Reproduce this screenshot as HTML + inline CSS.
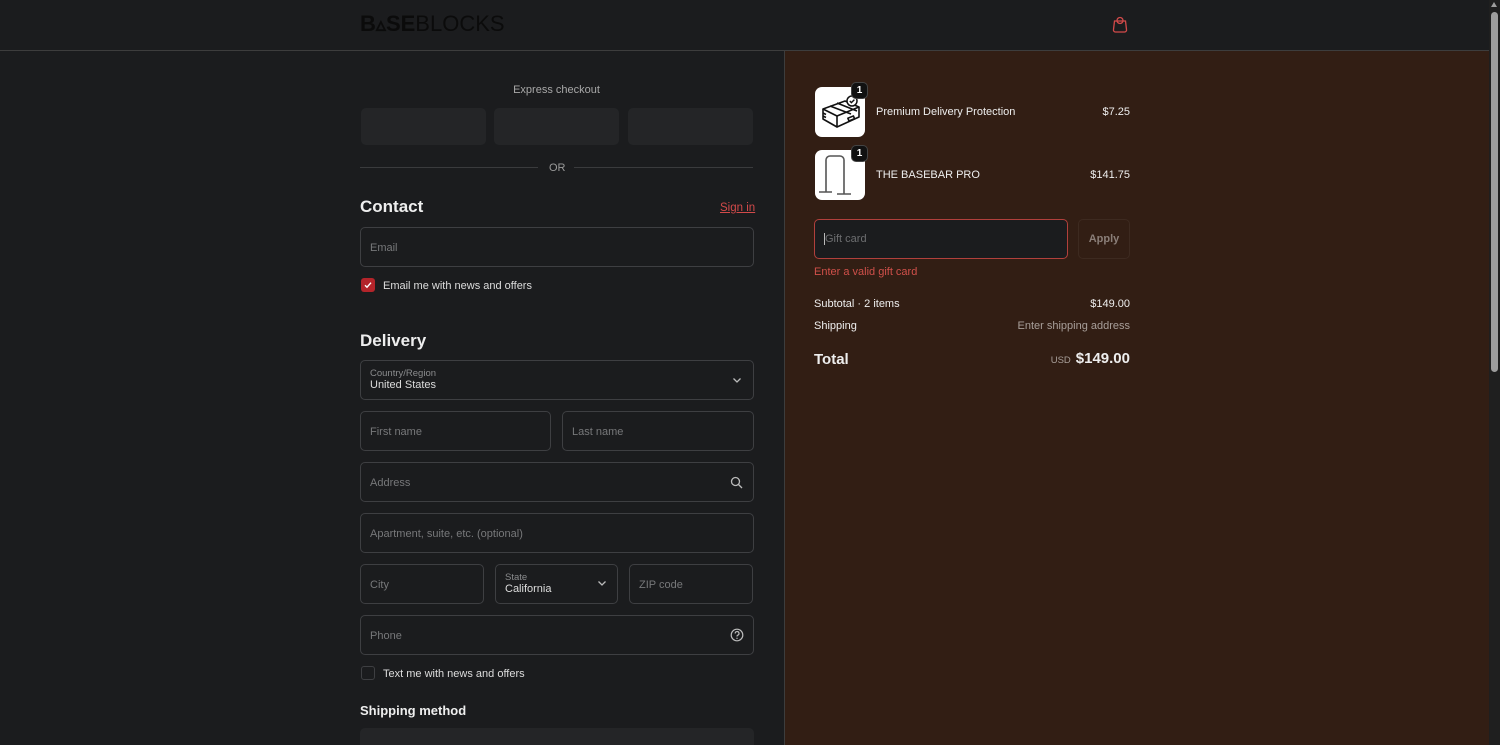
<!DOCTYPE html>
<html><head><meta charset="utf-8"><style>
*{box-sizing:border-box;margin:0;padding:0}
html,body{width:1500px;height:745px;overflow:hidden}
body{background:#1b1c1e;font-family:"Liberation Sans",sans-serif;color:#e6e6e6;position:relative;font-size:11px}
.a{position:absolute}
.r{position:absolute;right:370px;text-align:right}
.hdr{left:0;top:0;width:1489px;height:51px;border-bottom:1px solid #3d3d3d;background:#1b1c1e}
.right{left:784px;top:51px;width:705px;height:694px;background:#321e14;border-left:1px solid #3d3d3d}
.in{border:1px solid #3e3f42;border-radius:5px;background:#1b1c1e;color:#77787a;font-size:11px;padding-left:9px;display:flex;align-items:center;padding-top:1px}
.ex{background:#242527;border-radius:5px;height:37px;top:108px;width:125px}
.h{font-weight:bold;color:#eee}
.lbl{font-size:9.5px;color:#8a8b8d}
.val{font-size:11px;color:#ddd}
.cb{width:14px;height:14px;border-radius:3px}
.sb{left:1489px;top:0;width:11px;height:745px;background:#1f1f1f}
.thumb{left:1491px;top:12px;width:7px;height:360px;background:#9d9d9d;border-radius:4px}
.thumb2{left:1491px;top:2px;width:0;height:0;border-left:3.5px solid transparent;border-right:3.5px solid transparent;border-bottom:5px solid #9d9d9d}
.img{width:50px;height:50px;background:#fff;border-radius:7px}
.badge{width:17px;height:17px;border-radius:5px;background:#111;color:#fff;font-size:10px;font-weight:bold;display:flex;align-items:center;justify-content:center;border:1px solid #444}
</style></head><body>
<div class="a hdr"></div>
<div class="a" style="left:360px;top:12px;font-size:22px;color:#0b0b0b;line-height:24px"><b>B<span style="font-size:20px">▵</span>SE</b>BLOCKS</div>
<svg class="a" style="left:1112px;top:15px" width="16" height="18" viewBox="0 0 16 18"><path d="M2.5 6h11l1 8.5a2 2 0 0 1-2 2.5h-9a2 2 0 0 1-2-2.5z" fill="none" stroke="#d24a4a" stroke-width="1.3"/><circle cx="8" cy="5.5" r="3" fill="none" stroke="#d24a4a" stroke-width="1.3"/></svg>
<div class="a right"></div>
<div class="a sb"></div><div class="a thumb"></div><div class="a thumb2"></div>

<div class="a" style="left:360px;width:393px;top:84px;text-align:center;color:#a8a8a8;font-size:11px">Express checkout</div>
<div class="a ex" style="left:361px"></div><div class="a ex" style="left:494px"></div><div class="a ex" style="left:628px"></div>
<div class="a" style="left:360px;top:167px;width:178px;height:1px;background:#3a3b3d"></div>
<div class="a" style="left:574px;top:167px;width:179px;height:1px;background:#3a3b3d"></div>
<div class="a" style="left:549px;top:162px;color:#9a9a9a;font-size:11px">OR</div>

<div class="a h" style="left:360px;top:197px;font-size:17px">Contact</div>
<div class="a" style="left:720px;top:202px;color:#d24a4a;text-decoration:underline;font-size:11.5px">Sign in</div>
<div class="a in" style="left:360px;top:227px;width:394px;height:40px">Email</div>
<div class="a cb" style="left:361px;top:278px;background:#b3242a"><svg width="14" height="14"><path d="M4 7.2l2 2 4-4.5" fill="none" stroke="#fff" stroke-width="1.4"/></svg></div>
<div class="a" style="left:383px;top:280px;font-size:11px;color:#ddd">Email me with news and offers</div>

<div class="a h" style="left:360px;top:331px;font-size:17px">Delivery</div>
<div class="a in" style="left:360px;top:360px;width:394px;height:40px;display:block;padding-top:7px"><div class="lbl">Country/Region</div><div class="val">United States</div></div>
<svg class="a" style="left:732px;top:377px" width="10" height="7"><path d="M1.5 1.5l3.5 3.5 3.5-3.5" fill="none" stroke="#bbb" stroke-width="1.3"/></svg>
<div class="a in" style="left:360px;top:411px;width:191px;height:40px">First name</div>
<div class="a in" style="left:562px;top:411px;width:192px;height:40px">Last name</div>
<div class="a in" style="left:360px;top:462px;width:394px;height:40px">Address</div>
<svg class="a" style="left:730px;top:476px" width="13" height="13"><circle cx="5.5" cy="5.5" r="4" fill="none" stroke="#bbb" stroke-width="1.3"/><path d="M8.5 8.5l3.5 3.5" stroke="#bbb" stroke-width="1.3"/></svg>
<div class="a in" style="left:360px;top:513px;width:394px;height:40px">Apartment, suite, etc. (optional)</div>
<div class="a in" style="left:360px;top:564px;width:124px;height:40px">City</div>
<div class="a in" style="left:495px;top:564px;width:123px;height:40px;display:block;padding-top:7px"><div class="lbl">State</div><div class="val">California</div></div>
<svg class="a" style="left:597px;top:580px" width="10" height="7"><path d="M1.5 1.5l3.5 3.5 3.5-3.5" fill="none" stroke="#bbb" stroke-width="1.3"/></svg>
<div class="a in" style="left:629px;top:564px;width:124px;height:40px">ZIP code</div>
<div class="a in" style="left:360px;top:615px;width:394px;height:40px">Phone</div>
<svg class="a" style="left:730px;top:628px" width="14" height="14"><circle cx="7" cy="7" r="5.8" fill="none" stroke="#bbb" stroke-width="1.2"/><path d="M5.2 5.5a1.9 1.9 0 1 1 2.6 1.7c-.6.3-.8.6-.8 1.3" fill="none" stroke="#bbb" stroke-width="1.2"/><circle cx="7" cy="10.3" r=".7" fill="#bbb"/></svg>
<div class="a cb" style="left:361px;top:666px;border:1px solid #3e3f42"></div>
<div class="a" style="left:383px;top:668px;font-size:11px;color:#ddd">Text me with news and offers</div>
<div class="a h" style="left:360px;top:703px;font-size:13px">Shipping method</div>
<div class="a" style="left:360px;top:728px;width:394px;height:17px;background:#242527;border-radius:5px 5px 0 0"></div>

<div class="a img" style="left:815px;top:87px"><svg width="50" height="50" viewBox="0 0 50 50"><g fill="none" stroke="#111" stroke-width="1.6" stroke-linejoin="round"><path d="M8 22l22-8 14 6-22 9z"/><path d="M8 22v10l14 8V29"/><path d="M22 40l22-10V20"/><path d="M15 19l21 8M22 16l20 8"/><rect x="33" y="30" width="6" height="3" transform="rotate(-22 36 31)"/><path d="M8 26l3 1.5M8 29l3 1.5"/></g><circle cx="37" cy="14" r="5" fill="#fff" stroke="#111" stroke-width="1.5"/><path d="M34.8 14l1.6 1.6 3-3" fill="none" stroke="#111" stroke-width="1.4"/></svg></div>
<div class="a badge" style="left:851px;top:82px">1</div>
<div class="a" style="left:876px;top:106px;font-size:11px;color:#eee">Premium Delivery Protection</div>
<div class="r" style="top:106px;font-size:11px;color:#eee">$7.25</div>
<div class="a img" style="left:815px;top:150px"><svg width="50" height="50"><g fill="none" stroke="#555" stroke-width="1.6"><path d="M11 42V10a4 4 0 0 1 4-4h10a4 4 0 0 1 4 4v34"/><path d="M4 42h13M22 44h14"/></g></svg></div>
<div class="a badge" style="left:851px;top:145px">1</div>
<div class="a" style="left:876px;top:169px;font-size:11px;color:#eee">THE BASEBAR PRO</div>
<div class="r" style="top:169px;font-size:11px;color:#eee">$141.75</div>

<div class="a" style="left:814px;top:219px;width:254px;height:40px;border:1.5px solid #b1403c;border-radius:5px;background:#1b1c1e;color:#6d6e70;font-size:11px;padding:13px 0 0 9px"><span style="border-left:1px solid #bbb">Gift card</span></div>
<div class="a" style="left:1078px;top:219px;width:52px;height:40px;border:1px solid #3d2a20;border-radius:5px;color:#8b7f79;font-weight:bold;font-size:11px;display:flex;align-items:center;justify-content:center">Apply</div>
<div class="a" style="left:814px;top:266px;color:#d0504a;font-size:11px">Enter a valid gift card</div>
<div class="a" style="left:814px;top:298px;font-size:11px;color:#eee">Subtotal · 2 items</div>
<div class="r" style="top:298px;font-size:11px;color:#eee">$149.00</div>
<div class="a" style="left:814px;top:320px;font-size:11px;color:#eee">Shipping</div>
<div class="r" style="top:320px;font-size:11px;color:#a89f9a">Enter shipping address</div>
<div class="a h" style="left:814px;top:351px;font-size:15px">Total</div>
<div class="r" style="top:350px;font-size:15px"><span style="font-size:9.5px;color:#a89f9a;font-weight:normal;margin-right:5px">USD</span><b style="color:#eee">$149.00</b></div>
</body></html>
